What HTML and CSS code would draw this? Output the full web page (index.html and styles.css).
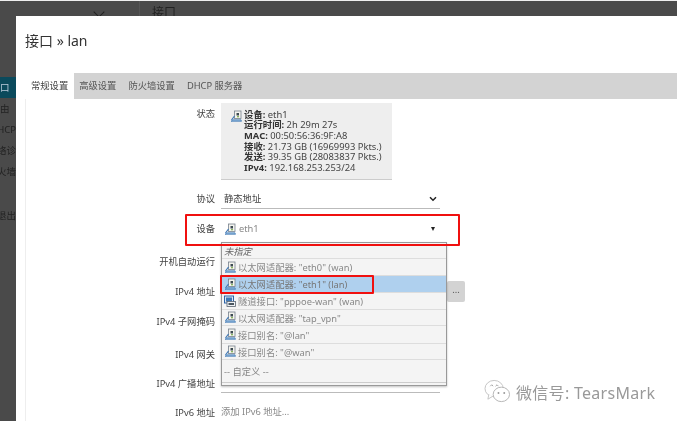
FILE: index.html
```html
<!DOCTYPE html>
<html lang="zh">
<head>
<meta charset="utf-8">
<title>接口 » lan</title>
<link rel="stylesheet" href="styles.css">
</head>
<body>
<svg class="defs" width="0" height="0" aria-hidden="true">
  <symbol id="eth" viewBox="0 0 12 12">
    <rect x="4.5" y="0.5" width="6.5" height="7.5" fill="#f4f4ee" stroke="#77808c" stroke-width="0.8"/>
    <rect x="6.5" y="2.5" width="2.5" height="2.5" fill="#3d4a52"/>
    <rect x="7" y="5.6" width="2" height="1.2" fill="#7fb04f"/>
    <path d="M1 10.8 L11.5 10.8 L11 9.3 L3 9.3 Z" fill="#8fb6de" stroke="#3f78b5" stroke-width="0.7"/>
    <path d="M1.5 9.5 L4.5 5.5" stroke="#3f78b5" stroke-width="1.2" fill="none"/>
  </symbol>
  <symbol id="tun" viewBox="0 0 12 12">
    <rect x="0.5" y="0.5" width="9" height="7" fill="#dfe8f2" stroke="#2d64a8" stroke-width="1"/>
    <rect x="2" y="2" width="6" height="4" fill="#3f78b5"/>
    <rect x="3" y="6" width="8.5" height="5" fill="#eef1f4" stroke="#59636e" stroke-width="0.8"/>
    <rect x="4.5" y="7.5" width="5.5" height="2" fill="#4a5660"/>
  </symbol>
</svg>

<div class="backdrop">
  <div class="top-strip"></div>
  <div class="page-bg">
    <aside class="side">
      <span class="chev"></span>
      <ul class="side-menu">
        <li class="side-active">口</li>
        <li>由</li>
        <li>HCP/</li>
        <li>络诊</li>
        <li>火墙</li>
        <li class="side-exit">退出</li>
      </ul>
    </aside>
    <div class="page-title">接口</div>
  </div>
</div>

<main class="modal">
  <h2 class="modal-title">接口 » lan</h2>
  <nav class="tabs">
    <span class="tab tab-on">常规设置</span>
    <span class="tab">高级设置</span>
    <span class="tab">防火墙设置</span>
    <span class="tab">DHCP 服务器</span>
  </nav>
  <section class="form">
    <div class="row row-status">
      <div class="lab">状态</div>
      <div class="status">
        <svg class="ico status-ico"><use href="#eth"/></svg>
        <div class="status-text">
          <b>设备:</b> eth1<br>
          <b>运行时间:</b> 2h 29m 27s<br>
          <b>MAC:</b> 00:50:56:36:9F:A8<br>
          <b>接收:</b> 21.73 GB (16969993 Pkts.)<br>
          <b>发送:</b> 39.35 GB (28083837 Pkts.)<br>
          <b>IPv4:</b> 192.168.253.253/24
        </div>
      </div>
    </div>
    <div class="row row-proto">
      <div class="lab">协议</div>
      <div class="field select"><span>静态地址</span><svg class="chevron" viewBox="0 0 8 6"><path d="M1 1.2 L4 4.2 L7 1.2" fill="none" stroke="#222" stroke-width="1.5"/></svg></div>
    </div>
    <div class="row row-device">
      <div class="lab">设备</div>
      <div class="field device"><svg class="ico"><use href="#eth"/></svg><span class="grey">eth1</span><span class="caret"></span></div>
    </div>
    <div class="row row-boot"><div class="lab">开机自动运行</div></div>
    <div class="row row-ip"><div class="lab">IPv4 地址</div><span class="more">...</span></div>
    <div class="row row-mask"><div class="lab">IPv4 子网掩码</div></div>
    <div class="row row-gw"><div class="lab">IPv4 网关</div></div>
    <div class="row row-bc"><div class="lab">IPv4 广播地址</div><div class="field blank"></div></div>
    <div class="row row-v6"><div class="lab">IPv6 地址</div><div class="field grey">添加 IPv6 地址...</div></div>
  </section>
</main>

<ul class="dropdown">
  <li class="opt opt-a"><i>未指定</i></li>
  <li class="opt opt-b"><svg class="ico"><use href="#eth"/></svg>以太网适配器: "eth0" (wan)</li>
  <li class="opt opt-c opt-sel"><svg class="ico"><use href="#eth"/></svg>以太网适配器: "eth1" (lan)</li>
  <li class="opt opt-d"><svg class="ico"><use href="#tun"/></svg>隧道接口: "pppoe-wan" (wan)</li>
  <li class="opt opt-e"><svg class="ico"><use href="#eth"/></svg>以太网适配器: "tap_vpn"</li>
  <li class="opt opt-f"><svg class="ico"><use href="#eth"/></svg>接口别名: "@lan"</li>
  <li class="opt opt-g"><svg class="ico"><use href="#eth"/></svg>接口别名: "@wan"</li>
  <li class="opt opt-h">-- 自定义 --</li>
</ul>

<div class="mark mark-device"></div>
<div class="mark mark-option"></div>

<div class="watermark">
  <svg class="wx" viewBox="0 0 28 26">
    <ellipse cx="10.5" cy="10" rx="9.5" ry="8.5" fill="#fff" stroke="#c4c4c4" stroke-width="1"/>
    <path d="M5 16 L4 21 L9 18" fill="#fff" stroke="#c4c4c4" stroke-width="1"/>
    <ellipse cx="18" cy="16" rx="8.5" ry="7.5" fill="#fff" stroke="#b4b4b4" stroke-width="1"/>
    <path d="M6.5 7.5 L8 6 L9.5 7.5 M12 7.5 L13.5 6 L15 7.5" fill="none" stroke="#999" stroke-width="0.9"/>
    <circle cx="15" cy="14.5" r="1" fill="#999"/>
    <circle cx="21" cy="14.5" r="1" fill="#999"/>
  </svg>
  <span class="wx-text">微信号: TearsMark</span>
</div>
</body>
</html>
```
FILE: styles.css
```css
* { box-sizing: border-box; }
html, body { margin: 0; padding: 0; width: 683px; height: 421px; overflow: hidden; background: #fff; }
body { position: relative; font-family: "Noto Sans", "Noto Sans CJK SC", sans-serif; font-size: 9.3px; color: #404040; filter: blur(0.3px); }
.defs { position: absolute; }
ul { list-style: none; margin: 0; padding: 0; }

/* dimmed page behind the dialog */
.backdrop { position: absolute; left: 0; top: 0; width: 677px; height: 421px; display: flex; flex-direction: column; }
.top-strip { height: 1px; background: #eee; }
.page-bg { flex: 1; display: flex; background: #4a4a4a; }
.side { width: 140px; position: relative; border-right: 1px solid #555; overflow: hidden; }
.chev { position: absolute; left: 95px; top: 7px; width: 8px; height: 8px; border-right: 1.5px solid #222; border-bottom: 1.5px solid #222; transform: rotate(45deg); }
.side-menu { padding-top: 76px; font-size: 9.5px; color: #b0b0b0; }
.side-menu li { height: 21px; line-height: 21px; color: #222; width: 16px; overflow: hidden; white-space: nowrap; direction: rtl; text-align: left; }
.side-menu .side-active { background: #0b4a5c; color: #bcd; }
.side-menu .side-exit { margin-top: 23px; }
.page-title { padding: 2px 0 0 12px; font-size: 12px; color: #222; }

/* dialog */
.modal { position: absolute; left: 16px; top: 16px; width: 661px; height: 405px; background: #fff; padding: 15px 0 0 9px; }
.modal-title { margin: 0; height: 42px; font-size: 14px; line-height: 20px; font-weight: 400; color: #333; }
.tabs { display: flex; height: 26px; background: #d3d3d3; align-items: stretch; }
.tab { padding: 0 7px 0 5px; line-height: 26px; color: #555; white-space: nowrap; }
.tab-on { background: #fff; padding: 0 6px; color: #444; }
.form { border-left: 1px solid #eee; height: 322px; padding-top: 4px; }

.row { display: grid; grid-template-columns: 189px 220px; column-gap: 6px; align-items: start; }
.lab { text-align: right; line-height: 12px; color: #444; white-space: nowrap; }
.row-status { height: 88px; }
.row-status .lab { padding-top: 5px; }
.status { width: 171px; height: 77px; background: #eee; border-bottom: 1px solid #ccc; padding: 6.5px 0 0 9px; display: flex; gap: 2px; }
.status-ico { width: 12px; height: 13px; margin-top: 0; flex: none; }
.status-text { font-size: 9.4px; line-height: 10.7px; color: #444; white-space: nowrap; }
.status-text b { font-weight: 700; color: #333; }
.ico { width: 12px; height: 13px; flex: none; }

.field { height: 18px; line-height: 16px; display: flex; align-items: center; }
.select { width: 219px; border-bottom: 1px solid #bbb; padding: 0 2px 2px 3px; justify-content: space-between; }
.chevron { width: 8px; height: 6px; margin-right: 1px; }
.row-proto { height: 22px; }
.row-proto .lab { padding-top: 2px; }
.row-device { height: 41px; }
.row-device .lab { padding-top: 10px; }
.device { width: 219px; height: 20px; gap: 3px; margin-top: 6px; padding: 0 0 0 3px; }
.caret { margin-left: auto; margin-right: 5px; width: 0; height: 0; border-left: 2.5px solid transparent; border-right: 2.5px solid transparent; border-top: 4px solid #222; }
.grey { color: #888; }
.row-boot { height: 30px; }
.row-ip { height: 30px; }
.row-mask { height: 33px; }
.row-gw { height: 29px; }
.row-bc { height: 29px; }
.row-boot .lab, .row-ip .lab, .row-mask .lab, .row-gw .lab, .row-bc .lab, .row-v6 .lab { padding-top: 2px; }
.blank { width: 219px; height: 17px; border-bottom: 1px solid #bbb; }
.row-v6 .field { height: 14px; }
.more { position: absolute; left: 431px; top: 265px; width: 18px; height: 21px; background: #d3d3d3; border-radius: 2px; text-align: center; line-height: 18px; color: #555; }

/* open list */
.dropdown { position: absolute; left: 221px; top: 242px; width: 226px; height: 144px; background: #f4f4f4; border: 1px solid #999; box-shadow: 0 1px 2px rgba(0,0,0,.25); padding-bottom: 3px; color: #888; }
.opt { display: flex; align-items: center; gap: 2px; padding-left: 2px; border-bottom: 1px solid #ddd; white-space: nowrap; overflow: hidden; }
.opt-a { height: 16px; color: #666; }
.opt-b { height: 17px; }
.opt-c { height: 17px; }
.opt-d { height: 17px; }
.opt-e { height: 16px; }
.opt-f { height: 18px; }
.opt-g { height: 16px; }
.opt-h { height: 23px; border-bottom: 1px solid #ccc; }
.opt-sel { background: #afd0ee; color: #777; }

/* annotations drawn on the screenshot */
.mark { position: absolute; border: 2px solid #f0100f; border-radius: 1px; pointer-events: none; }
.mark-device { left: 185px; top: 214px; width: 275px; height: 32px; }
.mark-option { left: 220px; top: 275px; width: 154px; height: 19px; }

.watermark { position: absolute; left: 484px; top: 379px; display: flex; align-items: center; gap: 5px; }
.wx { width: 27px; height: 25px; }
.wx-text { font-size: 16px; color: #999; letter-spacing: 0.3px; white-space: nowrap; }
```
